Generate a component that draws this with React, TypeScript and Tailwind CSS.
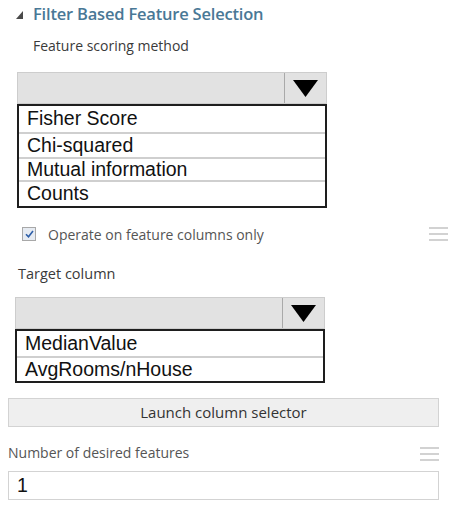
const ui = "font-['Open_Sans','Noto_Sans',sans-serif]";
const arial = "font-['Liberation_Sans',Arial,sans-serif]";

function Hamburger() {
  return (
    <div className="flex flex-col gap-[4px] w-[19px]">
      <div className="h-[2px] bg-[#d2d2d2]" />
      <div className="h-[2px] bg-[#d2d2d2]" />
      <div className="h-[2px] bg-[#d2d2d2]" />
    </div>
  );
}

function Dropdown({ items, rowHeights }: { items: string[]; rowHeights: number[] }) {
  return (
    <div className="w-[310px]">
      <div className="flex h-[32px] bg-[#e2e2e2] border border-[#cdcdcd]">
        <div className="flex-1" />
        <div className="w-[42px] border-l border-[#a9a9a9] flex items-center justify-center pt-[1px]">
          <svg width="25" height="17" viewBox="0 0 25 17">
            <polygon points="0,0 25,0 12.5,17" fill="#000" />
          </svg>
        </div>
      </div>
      <div className={`border-2 border-[#1e1e1e] ${arial} text-[19.5px] text-[#111]`}>
        {items.map((item, i) => (
          <div
            key={item}
            className={`pl-[8px] flex items-center leading-none ${i > 0 ? "border-t-2 border-[#cfcfcf]" : ""}`}
            style={{ height: rowHeights[i] }}
          >
            {item}
          </div>
        ))}
      </div>
    </div>
  );
}

export default function App() {
  return (
    <div className={`w-[457px] h-[510px] bg-white text-[#333] overflow-hidden ${ui}`}>
      {/* section header */}
      <div className="flex items-center h-[28px] pl-[16px]">
        <svg width="7" height="8" viewBox="0 0 7 8" className="mt-[1px]">
          <polygon points="7,0 7,8 0,8" fill="#4a4a4a" />
        </svg>
        <span className="ml-[10px] text-[16.5px] font-semibold text-[#497896] tracking-[-0.2px]">
          Filter Based Feature Selection
        </span>
      </div>

      <div className="mt-[8px] pl-[33px] h-[20px] leading-[20px] text-[14px] text-[#3a3a3a]">
        Feature scoring method
      </div>

      <div className="mt-[16px] ml-[17px]">
        <Dropdown
          items={["Fisher Score", "Chi-squared", "Mutual information", "Counts"]}
          rowHeights={[26, 25, 23, 26]}
        />
      </div>

      {/* checkbox row */}
      <div className="mt-[16px] h-[20px] flex items-center pl-[22px] pr-[9px]">
        <div className="w-[14px] h-[14px] border border-[#a8a8a8] bg-[#e6ebf2] flex items-center justify-center">
          <svg width="9" height="8" viewBox="0 0 9 8">
            <path d="M1 4.2 L3.5 6.8 L8 1" stroke="#2d5ea8" strokeWidth="1.6" fill="none" />
          </svg>
        </div>
        <span className="ml-[12px] text-[14px] text-[#555]">Operate on feature columns only</span>
        <div className="ml-auto">
          <Hamburger />
        </div>
      </div>

      <div className="mt-[20px] pl-[18px] h-[20px] leading-[20px] text-[14.5px] text-[#3a3a3a]">
        Target column
      </div>

      <div className="mt-[13px] ml-[15px]">
        <Dropdown items={["MedianValue", "AvgRooms/nHouse"]} rowHeights={[25, 25]} />
      </div>

      <div className="mt-[15px] mx-[8px] w-[431px]">
        <button className="w-full h-[29px] bg-[#efefef] border border-[#d3d3d3] text-[15px] text-[#333]">
          Launch column selector
        </button>

        <div className="mt-[15px] h-[20px] flex items-center">
          <span className="text-[14px] text-[#555]">Number of desired features</span>
          <div className="ml-auto mt-[4px]">
            <Hamburger />
          </div>
        </div>

        <div className={`mt-[9px] h-[29px] border border-[#d3d3d3] flex items-center pl-[8px] ${arial} text-[19.5px] text-[#111]`}>
          1
        </div>
      </div>
    </div>
  );
}
